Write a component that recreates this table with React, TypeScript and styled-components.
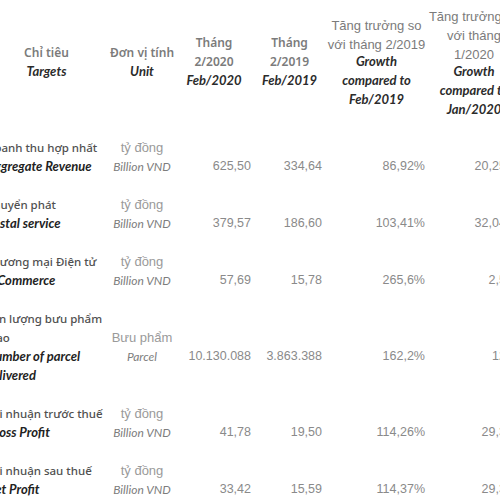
import React from "react";
import styled, { createGlobalStyle } from "styled-components";

const Global = createGlobalStyle`
  html, body { margin: 0; padding: 0; background: #ffffff; }
  body { width: 500px; height: 500px; overflow: hidden; }
`;

const COLS = "127px 64px 80px 71px 103px 92px";

const Table = styled.div`
  display: flex;
  flex-direction: column;
  margin: -5px 0 0 -17px;
  width: 537px;
`;

const Row = styled.div`
  display: grid;
  grid-template-columns: ${COLS};
  align-items: center;
  padding: 9.5px 0;
`;

const alignMap = { left: "flex-start", center: "center", right: "flex-end" } as const;

const Cell = styled.div<{ $align?: "left" | "center" | "right"; $offset?: boolean }>`
  display: flex;
  flex-direction: column;
  align-items: ${(p) => alignMap[p.$align ?? "center"]};
  padding: ${(p) => (p.$offset ? "19px 3px 0" : "0 3px")};
  text-align: ${(p) => p.$align ?? "center"};
  line-height: 19px;
  white-space: nowrap;
  min-width: 0;
`;

const HeadVi = styled.div`
  font-family: "Noto Sans", sans-serif;
  font-weight: 600;
  font-size: 12px;
  color: #7b7b7b;
`;

const HeadViSys = styled.div`
  font-family: "Liberation Sans", Arial, sans-serif;
  font-size: 13px;
  color: #7b7b7b;
  position: relative;
  top: 2px;
`;

const HeadEn = styled.div`
  font-family: "Lato", sans-serif;
  font-style: italic;
  font-weight: 700;
  font-size: 13px;
  color: #2b2b2b;
`;

const BodyVi = styled.div`
  font-family: "Noto Sans", sans-serif;
  font-weight: 500;
  font-size: 11.5px;
  color: #505050;
`;

const BodyEn = styled.div`
  font-family: "Lato", sans-serif;
  font-style: italic;
  font-weight: 700;
  font-size: 13px;
  color: #222222;
`;

const UnitVi = styled.div`
  font-family: "Liberation Sans", Arial, sans-serif;
  font-size: 13px;
  color: #9a9a9a;
`;

const UnitEn = styled.div`
  font-family: "Lato", sans-serif;
  font-style: italic;
  font-size: 12px;
  color: #7d7d7d;
`;

const Value = styled.div`
  font-family: "Liberation Sans", Arial, sans-serif;
  font-size: 12.5px;
  color: #8a8a8a;
`;

type Item = {
  vi: string[];
  en: string[];
  unitVi: string;
  unitEn: string;
  values: string[];
};

const rows: Item[] = [
  { vi: ["Doanh thu hợp nhất"], en: ["Aggregate Revenue"], unitVi: "tỷ đồng", unitEn: "Billion VND", values: ["625,50", "334,64", "86,92%", "20,25%"] },
  { vi: ["Chuyển phát"], en: ["Postal service"], unitVi: "tỷ đồng", unitEn: "Billion VND", values: ["379,57", "186,60", "103,41%", "32,04%"] },
  { vi: ["Thương mại Điện tử"], en: ["E-Commerce"], unitVi: "tỷ đồng", unitEn: "Billion VND", values: ["57,69", "15,78", "265,6%", "2,5%"] },
  { vi: ["Sản lượng bưu phẩm", "giao"], en: ["Number of parcel", "delivered"], unitVi: "Bưu phẩm", unitEn: "Parcel", values: ["10.130.088", "3.863.388", "162,2%", "12%"] },
  { vi: ["Lợi nhuận trước thuế"], en: ["Gross Profit"], unitVi: "tỷ đồng", unitEn: "Billion VND", values: ["41,78", "19,50", "114,26%", "29,3%"] },
  { vi: ["Lợi nhuận sau thuế"], en: ["Net Profit"], unitVi: "tỷ đồng", unitEn: "Billion VND", values: ["33,42", "15,59", "114,37%", "29,3%"] },
];

const Lines = ({ items, as: C }: { items: string[]; as: React.ElementType }) => (
  <>
    {items.map((t) => (
      <C key={t}>{t}</C>
    ))}
  </>
);

export default function App() {
  return (
    <>
      <Global />
      <Table>
        <Row>
          <Cell>
            <HeadVi>Chỉ tiêu</HeadVi>
            <HeadEn>Targets</HeadEn>
          </Cell>
          <Cell>
            <HeadVi>Đơn vị tính</HeadVi>
            <HeadEn>Unit</HeadEn>
          </Cell>
          <Cell>
            <Lines as={HeadVi} items={["Tháng", "2/2020"]} />
            <HeadEn>Feb/2020</HeadEn>
          </Cell>
          <Cell>
            <Lines as={HeadVi} items={["Tháng", "2/2019"]} />
            <HeadEn>Feb/2019</HeadEn>
          </Cell>
          <Cell>
            <Lines as={HeadViSys} items={["Tăng trưởng so", "với tháng 2/2019"]} />
            <Lines as={HeadEn} items={["Growth", "compared to", "Feb/2019"]} />
          </Cell>
          <Cell>
            <Lines as={HeadViSys} items={["Tăng trưởng so", "với tháng", "1/2020"]} />
            <Lines as={HeadEn} items={["Growth", "compared to", "Jan/2020"]} />
          </Cell>
        </Row>
        {rows.map((r) => (
          <Row key={r.en.join(" ")}>
            <Cell $align="left">
              <Lines as={BodyVi} items={r.vi} />
              <Lines as={BodyEn} items={r.en} />
            </Cell>
            <Cell>
              <UnitVi>{r.unitVi}</UnitVi>
              <UnitEn>{r.unitEn}</UnitEn>
            </Cell>
            {r.values.map((v, i) => (
              <Cell key={i} $align="right" $offset>
                <Value>{v}</Value>
              </Cell>
            ))}
          </Row>
        ))}
      </Table>
    </>
  );
}
